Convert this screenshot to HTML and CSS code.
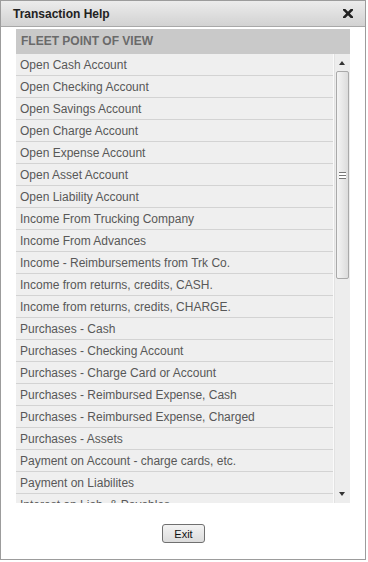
FILE: index.html
```html
<!DOCTYPE html>
<html>
<head>
<meta charset="utf-8">
<link rel="stylesheet" href="styles.css">
</head>
<body>
<div class="dialog">
  <div class="titlebar">
    <span class="title">Transaction Help</span>
    <svg class="close" width="10" height="9" viewBox="0 0 10 9"><path d="M1 0.5 L9 8.5 M9 0.5 L1 8.5" stroke="#222" stroke-width="2.6" stroke-linecap="square"/></svg>
  </div>
  <div class="content">
    <div class="panel">
      <div class="panel-head">FLEET POINT OF VIEW</div>
      <div class="panel-body">
        <ul class="list">
          <li>Open Cash Account</li>
          <li>Open Checking Account</li>
          <li>Open Savings Account</li>
          <li>Open Charge Account</li>
          <li>Open Expense Account</li>
          <li>Open Asset Account</li>
          <li>Open Liability Account</li>
          <li>Income From Trucking Company</li>
          <li>Income From Advances</li>
          <li>Income - Reimbursements from Trk Co.</li>
          <li>Income from returns, credits, CASH.</li>
          <li>Income from returns, credits, CHARGE.</li>
          <li>Purchases - Cash</li>
          <li>Purchases - Checking Account</li>
          <li>Purchases - Charge Card or Account</li>
          <li>Purchases - Reimbursed Expense, Cash</li>
          <li>Purchases - Reimbursed Expense, Charged</li>
          <li>Purchases - Assets</li>
          <li>Payment on Account - charge cards, etc.</li>
          <li>Payment on Liabilites</li>
          <li>Interest on Liab. &amp; Payables</li>
        </ul>
        <div class="scrollbar">
          <div class="arrow up"></div>
          <div class="track">
            <div class="thumb"><span class="grip"></span></div>
          </div>
          <div class="arrow down"></div>
        </div>
      </div>
    </div>
    <div class="actions">
      <button class="btn">Exit</button>
    </div>
  </div>
</div>
</body>
</html>
```

FILE: styles.css
```css
* { box-sizing: border-box; }
html, body { margin: 0; padding: 0; background: #fff; }
body { font-family: "Liberation Sans", Arial, sans-serif; font-size: 12px; }

.dialog {
  width: 366px;
  height: 560px;
  border: 1px solid #9c9c9c;
  display: flex;
  flex-direction: column;
  background: #fff;
}

.titlebar {
  height: 26px;
  flex: none;
  display: flex;
  align-items: center;
  justify-content: space-between;
  padding: 0 12px 0 12px;
  background: linear-gradient(#ececec, #d2d2d2);
  border-bottom: 1px solid #a8a8a8;
}
.title { font-weight: bold; font-size: 12px; color: #222; }
.close { display: block; }

.content {
  flex: 1;
  display: flex;
  flex-direction: column;
  padding: 2px 15px 0 15px;
}

.panel { display: flex; flex-direction: column; }
.panel-head {
  height: 25px;
  background: #c9c9c9;
  color: #6a6a6a;
  font-weight: bold;
  font-size: 12px;
  line-height: 25px;
  padding-left: 5px;
}
.panel-body {
  height: 449px;
  display: flex;
  overflow: hidden;
}
.list {
  list-style: none;
  margin: 0;
  padding: 0;
  flex: 1;
  overflow: hidden;
  background: #efefef;
  border-right: 1px solid #fafafa;
}
.list li {
  height: 22px;
  padding-top: 2px;
  line-height: 19px;
  padding-left: 4px;
  color: #585858;
  font-size: 12px;
  background: #efefef;
  border-bottom: 1px solid #d3d3d3;
  white-space: nowrap;
}

.scrollbar {
  width: 16px;
  flex: none;
  display: flex;
  flex-direction: column;
  background: #ededed;
  border-left: 1px solid #e2e2e2;
}
.arrow { height: 17px; flex: none; position: relative; }
.arrow::after {
  content: "";
  position: absolute;
  left: 4px;
  border-left: 3.5px solid transparent;
  border-right: 3.5px solid transparent;
}
.arrow.up::after { top: 7px; border-bottom: 4px solid #333; }
.arrow.down::after { top: 6px; border-top: 4px solid #333; }
.track { flex: 1; display: flex; flex-direction: column; }
.thumb {
  height: 208px;
  margin: 0 1px;
  border: 1px solid #a9a9a9;
  border-radius: 2px;
  background: linear-gradient(90deg, #f4f4f4, #dcdcdc);
  display: flex;
  align-items: center;
  justify-content: center;
}
.grip {
  width: 7px;
  height: 7px;
  border-top: 1px solid #777;
  border-bottom: 1px solid #777;
  background: linear-gradient(#fff 0 2px, #777 2px 3px, #fff 3px 5px);
}

.actions {
  display: flex;
  justify-content: center;
  padding-top: 21px;
  padding-left: 1px;
}
.btn {
  width: 43px;
  height: 19px;
  padding: 0;
  font-family: "Liberation Sans", Arial, sans-serif;
  font-size: 11px;
  color: #111;
  border: 1px solid #707070;
  border-radius: 3px;
  background: linear-gradient(#f3f3f3, #dcdcdc);
}
```
